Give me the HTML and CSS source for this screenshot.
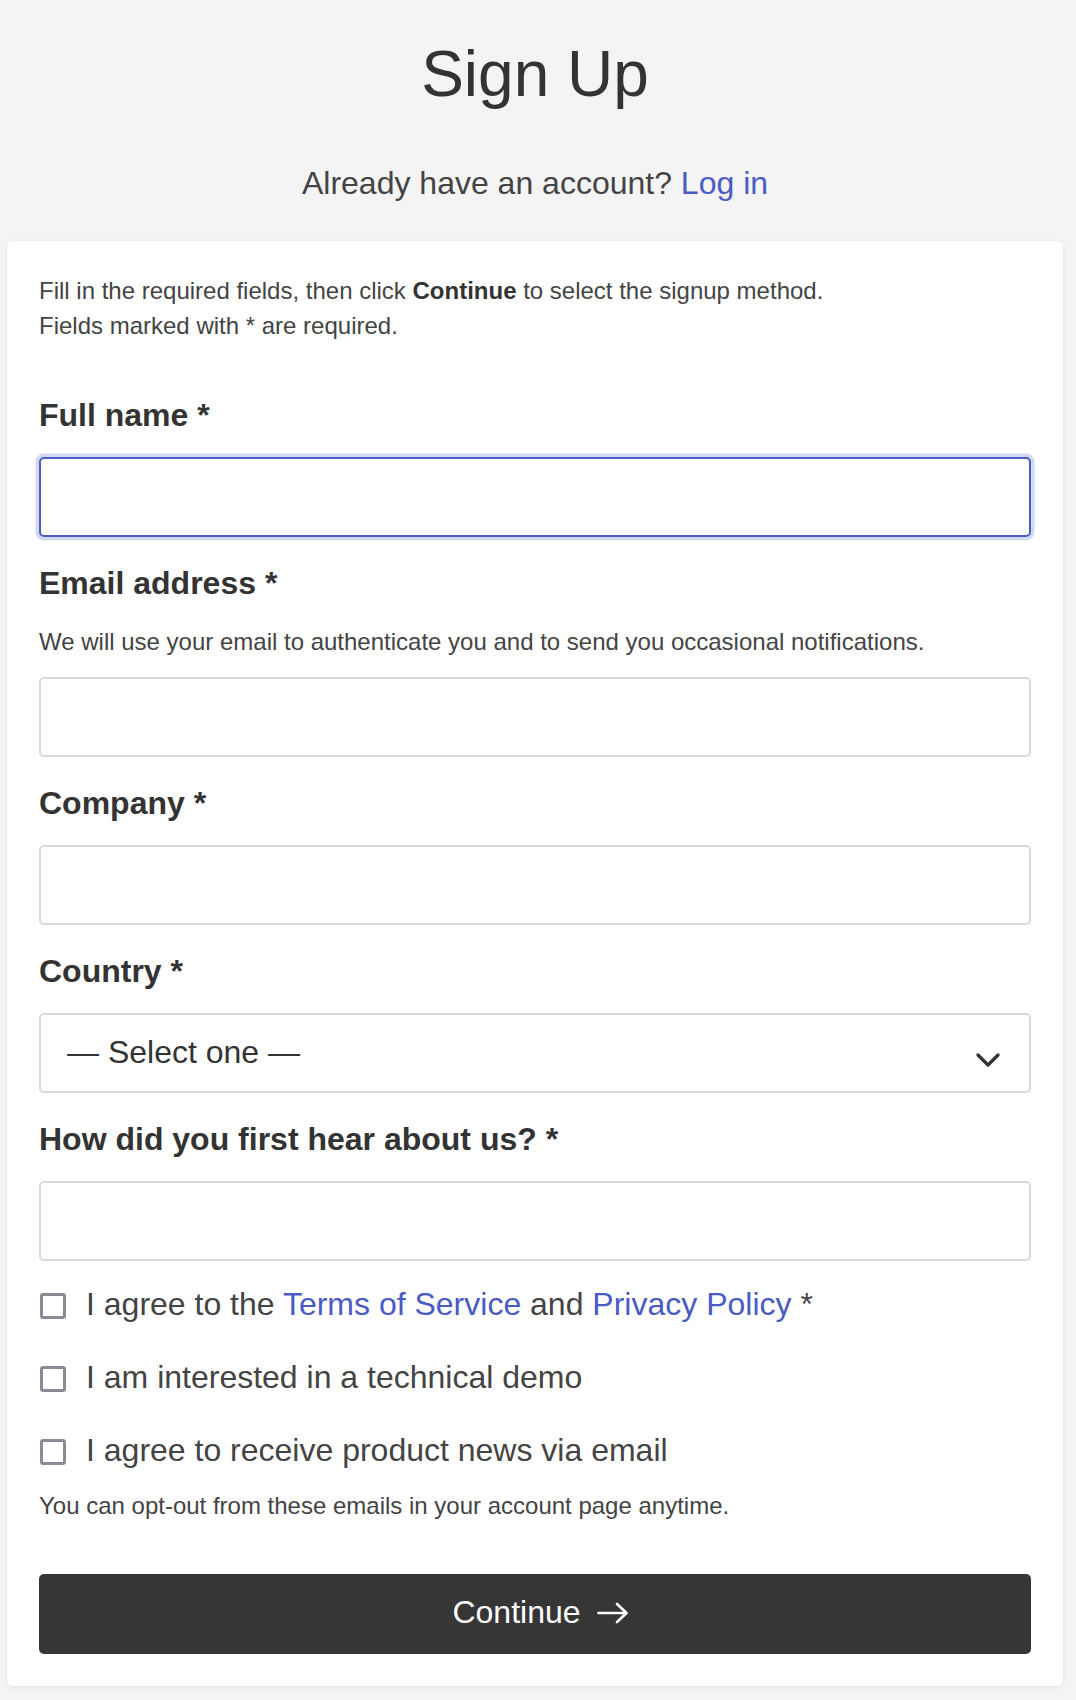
FILE: index.html
```html
<!DOCTYPE html>
<html lang="en">
<head>
<meta charset="utf-8">
<title>Sign Up</title>
<link rel="stylesheet" href="styles.css">
</head>
<body>
<div class="page">
  <h1 class="title">Sign Up</h1>
  <p class="subtitle">Already have an account? <a class="link" href="#">Log in</a></p>
  <form class="card">
    <p class="intro">Fill in the required fields, then click <strong>Continue</strong> to select the signup method.<br>Fields marked with * are required.</p>
    <div class="fields">
      <div class="field">
        <label class="label" for="name">Full name *</label>
        <input class="input is-focused" id="name" type="text">
      </div>
      <div class="field">
        <label class="label label-help" for="email">Email address *</label>
        <p class="help">We will use your email to authenticate you and to send you occasional notifications.</p>
        <input class="input" id="email" type="email">
      </div>
      <div class="field">
        <label class="label" for="company">Company *</label>
        <input class="input" id="company" type="text">
      </div>
      <div class="field">
        <label class="label" for="country">Country *</label>
        <div class="select-wrap">
          <select class="input select" id="country">
            <option>— Select one —</option>
          </select>
          <svg class="chevron" width="24" height="14" viewBox="0 0 24 14" aria-hidden="true">
            <polyline points="2,2 12,12 22,2" fill="none" stroke="#333" stroke-width="3.2" stroke-linecap="round" stroke-linejoin="round"/>
          </svg>
        </div>
      </div>
      <div class="field">
        <label class="label" for="hear">How did you first hear about us? *</label>
        <input class="input" id="hear" type="text">
      </div>
    </div>
    <div class="checks">
      <label class="check"><input class="box" type="checkbox"><span>I agree to the <a class="link" href="#">Terms of Service</a> and <a class="link" href="#">Privacy Policy</a> *</span></label>
      <label class="check"><input class="box" type="checkbox"><span>I am interested in a technical demo</span></label>
      <label class="check"><input class="box" type="checkbox"><span>I agree to receive product news via email</span></label>
    </div>
    <p class="optout">You can opt-out from these emails in your account page anytime.</p>
    <button class="button" type="button">
      <span>Continue</span>
      <svg width="32" height="22" viewBox="0 0 32 22" aria-hidden="true">
        <line x1="1.5" y1="11" x2="29" y2="11" stroke="#fff" stroke-width="2.6" stroke-linecap="round"/>
        <polyline points="20,2 29.5,11 20,20" fill="none" stroke="#fff" stroke-width="2.6" stroke-linecap="round" stroke-linejoin="round"/>
      </svg>
    </button>
  </form>
</div>
</body>
</html>
```
FILE: styles.css
```css
* { box-sizing: border-box; }

html, body {
  margin: 0;
  padding: 0;
  background: #f4f4f4;
}

body {
  font-family: "Liberation Sans", Arial, Helvetica, sans-serif;
  color: #333;
}

.page {
  padding: 37px 13px 20px 7px;
}

.title {
  margin: 0;
  font-size: 64px;
  line-height: 74px;
  font-weight: normal;
  text-align: center;
  color: #333;
}

.subtitle {
  margin: 52px 0 0;
  font-size: 32px;
  line-height: 40px;
  text-align: center;
  color: #444;
}

.link {
  color: #4a5bc6;
  text-decoration: none;
}

.card {
  margin-top: 38px;
  background: #fff;
  border-radius: 5px;
  box-shadow: 0 1px 4px rgba(0, 0, 0, 0.09);
  padding: 32px 32px 32px;
}

.intro {
  margin: 0 0 52px;
  font-size: 24px;
  line-height: 35px;
  color: #444;
}

.intro strong {
  color: #333;
}

.fields {
  display: flex;
  flex-direction: column;
  gap: 26px;
}

.field {
  display: flex;
  flex-direction: column;
}

.label {
  display: block;
  font-size: 32px;
  line-height: 40px;
  font-weight: bold;
  color: #333;
  margin-bottom: 22px;
}

.label-help {
  margin-bottom: 21px;
}

.help {
  margin: 0 0 18px;
  font-size: 24px;
  line-height: 35px;
  color: #444;
}

.input {
  display: block;
  width: 100%;
  height: 80px;
  margin: 0;
  padding: 0 26px;
  border: 2px solid #dadada;
  border-radius: 5px;
  background: #fff;
  font-family: inherit;
  font-size: 32px;
  color: #333;
  outline: none;
}

.input.is-focused {
  border-color: #4b5dc5;
  box-shadow: 0 0 0 3.5px #d3d8f1;
}

.select-wrap {
  position: relative;
}

.select {
  -webkit-appearance: none;
  appearance: none;
  padding-left: 26px;
  padding-bottom: 2px;
  line-height: 40px;
}

.chevron {
  position: absolute;
  right: 31px;
  top: 40px;
  pointer-events: none;
}

.checks {
  margin-top: 23px;
  display: flex;
  flex-direction: column;
  gap: 33px;
}

.check {
  display: flex;
  align-items: center;
  gap: 20px;
  font-size: 32px;
  line-height: 40px;
  color: #444;
}

.box {
  -webkit-appearance: none;
  appearance: none;
  flex: none;
  width: 26px;
  height: 26px;
  margin: 4px 0 0 1px;
  border: 3px solid #8a8a97;
  border-radius: 3px;
  background: #fff;
}

.optout {
  margin: 18px 0 0;
  font-size: 24px;
  line-height: 35px;
  color: #444;
}

.button {
  margin-top: 51px;
  display: flex;
  align-items: center;
  justify-content: center;
  gap: 16px;
  width: 100%;
  height: 80px;
  border: none;
  border-radius: 5px;
  background: #363636;
  color: #fff;
  font-family: inherit;
  font-size: 32px;
  line-height: 40px;
  padding: 0 0 4px 11px;
  cursor: pointer;
}

.button svg {
  display: block;
  margin-top: 2px;
}
```
